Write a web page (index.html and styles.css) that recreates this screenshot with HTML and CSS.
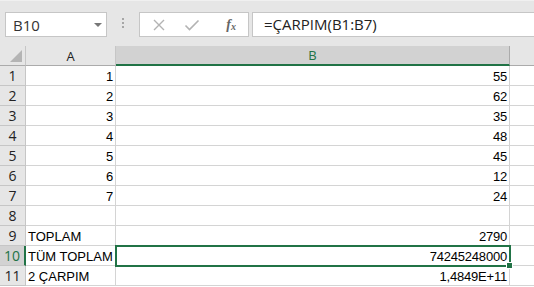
FILE: index.html
```html
<!DOCTYPE html>
<html lang="tr">

<head>
    <meta charset="UTF-8">
    <title>ÇARPIM</title>
    <link rel="stylesheet" href="styles.css">
</head>

<body>
    <div class="toolbar">
        <div class="name-box">
            <span>B10</span>
            <span class="caret"></span>
        </div>
        <div class="grip">
            <i></i><i></i><i></i>
        </div>
        <div class="fx-buttons">
            <svg width="14" height="14" viewBox="0 0 14 14"><path d="M2 2 L12 12 M12 2 L2 12" stroke="#b3b3b3" stroke-width="1.4" fill="none"/></svg>
            <svg width="16" height="14" viewBox="0 0 16 14"><path d="M1.5 7.5 L5.5 11.5 L14.5 2.5" stroke="#b3b3b3" stroke-width="1.6" fill="none"/></svg>
            <span class="fx">f<sub>x</sub></span>
        </div>
        <div class="formula">=ÇARPIM(B1:B7)</div>
    </div>

    <div class="sheet">
        <div class="corner"><span></span></div>
        <div class="col-head">A</div>
        <div class="col-head active">B</div>
        <div class="col-rest"></div>

        <div class="row-head">1</div><div class="cell num">1</div><div class="cell num">55</div><div class="cell rest"></div>
        <div class="row-head">2</div><div class="cell num">2</div><div class="cell num">62</div><div class="cell rest"></div>
        <div class="row-head">3</div><div class="cell num">3</div><div class="cell num">35</div><div class="cell rest"></div>
        <div class="row-head">4</div><div class="cell num">4</div><div class="cell num">48</div><div class="cell rest"></div>
        <div class="row-head">5</div><div class="cell num">5</div><div class="cell num">45</div><div class="cell rest"></div>
        <div class="row-head">6</div><div class="cell num">6</div><div class="cell num">12</div><div class="cell rest"></div>
        <div class="row-head">7</div><div class="cell num">7</div><div class="cell num">24</div><div class="cell rest"></div>
        <div class="row-head">8</div><div class="cell"></div><div class="cell num"></div><div class="cell rest"></div>
        <div class="row-head">9</div><div class="cell">TOPLAM</div><div class="cell num">2790</div><div class="cell rest"></div>
        <div class="row-head active">10</div><div class="cell">TÜM TOPLAM</div><div class="cell num selected">74245248000<span class="handle"></span></div><div class="cell rest"></div>
        <div class="row-head">11</div><div class="cell">2 ÇARPIM</div><div class="cell num">1,4849E+11</div><div class="cell rest"></div>
    </div>
</body>

</html>
```

FILE: styles.css
```css
body {
    margin: 0;
    width: 534px;
    height: 287px;
    overflow: hidden;
    background-color: #ffffff;
    font-family: "Liberation Sans", Arial, sans-serif;
}

.toolbar {
    display: flex;
    align-items: flex-start;
    height: 46px;
    padding: 11px 0 0 5px;
    box-sizing: border-box;
    background-color: #e6e6e6;
    border-top: 1px solid #f0f0f0;
}

.name-box {
    display: flex;
    align-items: center;
    justify-content: space-between;
    width: 102px;
    height: 25px;
    padding: 0 4px 0 7px;
    box-sizing: border-box;
    background-color: white;
    border: 1px solid #c6c6c6;
    font-family: "Open Sans", sans-serif;
    font-size: 15px;
    color: #333;
}

.caret {
    width: 0;
    height: 0;
    border-left: 4px solid transparent;
    border-right: 4px solid transparent;
    border-top: 4px solid #777;
}

.grip {
    display: flex;
    flex-direction: column;
    gap: 2px;
    width: 32px;
    padding-top: 6px;
    align-items: center;
}

.grip i {
    display: block;
    width: 2px;
    height: 2px;
    background-color: #a6a6a6;
}

.fx-buttons {
    display: flex;
    align-items: center;
    gap: 18px;
    width: 110px;
    height: 25px;
    padding: 0 12px 0 12px;
    box-sizing: border-box;
    background-color: white;
    border: 1px solid #c6c6c6;
    margin-right: 3px;
}

.fx {
    margin-left: auto;
    font-family: "Liberation Serif", serif;
    font-style: italic;
    font-weight: bold;
    font-size: 14px;
    color: #666;
}

.fx sub {
    font-size: 10px;
    vertical-align: -1px;
}

.formula {
    flex: 1;
    height: 25px;
    line-height: 23px;
    padding-left: 11px;
    box-sizing: border-box;
    background-color: white;
    border: 1px solid #c6c6c6;
    border-right: none;
    font-family: "Open Sans", sans-serif;
    font-size: 15px;
    color: #222;
}

.sheet {
    display: grid;
    grid-template-columns: 26px 90px 394px 24px;
    grid-template-rows: 20px repeat(11, 20px);
    font-size: 13px;
}

.corner {
    position: relative;
    background-color: #e6e6e6;
    border-right: 1px solid #c6c6c6;
    border-bottom: 1px solid #ababab;
}

.corner span {
    position: absolute;
    right: 3px;
    bottom: 3px;
    width: 0;
    height: 0;
    border-left: 12px solid transparent;
    border-bottom: 12px solid #b4b4b4;
}

.col-head {
    display: flex;
    align-items: center;
    justify-content: center;
    background-color: #e6e6e6;
    border-right: 1px solid #c6c6c6;
    border-bottom: 1px solid #ababab;
    font-family: "Open Sans", sans-serif;
    font-size: 13px;
    color: #222;
}

.col-head.active {
    background-color: #d2d2d2;
    border-right-color: #ababab;
    border-bottom: 2px solid #217346;
    color: #217346;
}

.col-rest {
    background-color: #e6e6e6;
    border-bottom: 1px solid #ababab;
}

.row-head {
    display: flex;
    align-items: center;
    justify-content: center;
    background-color: #e6e6e6;
    border-right: 1px solid #c6c6c6;
    border-bottom: 1px solid #c6c6c6;
    font-family: "Open Sans", sans-serif;
    font-size: 14px;
    color: #222;
}

.row-head.active {
    background-color: #d2d2d2;
    border-right: 2px solid #217346;
    color: #217346;
}

.cell {
    display: flex;
    align-items: flex-end;
    padding: 0 2px 1px 2px;
    box-sizing: border-box;
    border-right: 1px solid #d4d4d4;
    border-bottom: 1px solid #d4d4d4;
    color: #000;
    line-height: 15px;
}

.cell.num {
    justify-content: flex-end;
    letter-spacing: -0.2px;
}

.cell.rest {
    border-right: none;
}

.cell.selected {
    position: relative;
    outline: 2px solid #217346;
    outline-offset: -1px;
    z-index: 1;
}

.handle {
    position: absolute;
    right: -4px;
    bottom: -4px;
    width: 5px;
    height: 5px;
    background-color: #217346;
    border: 1px solid white;
}
```
